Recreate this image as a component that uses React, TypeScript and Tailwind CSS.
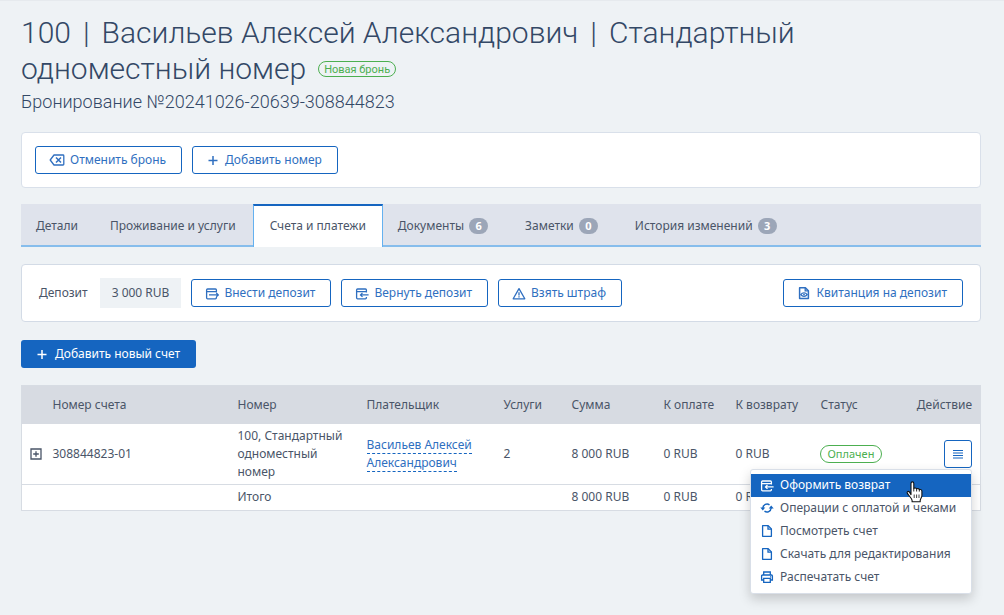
import type { ReactNode } from 'react';

function Svg({ className = 'h-[14px] w-[14px]', children }: { className?: string; children: ReactNode }) {
  return (
    <svg viewBox="0 0 14 14" fill="none" stroke="currentColor" strokeWidth="1.3" className={`shrink-0 ${className}`} aria-hidden="true">
      {children}
    </svg>
  );
}

const CancelIcon = () => (
  <svg viewBox="0 0 16 14" fill="none" stroke="currentColor" strokeWidth="1.3" className="h-[14px] w-[16px] shrink-0" aria-hidden="true">
    <path d="M5 2h9a.8.8 0 0 1 .8.8v8.4a.8.8 0 0 1-.8.8H5L1.2 7z" strokeLinejoin="round" />
    <path d="M7 4.5l5 5M12 4.5l-5 5" strokeWidth="1.5" />
  </svg>
);

const PlusIcon = () => (
  <Svg>
    <path d="M7 3v9M2.5 7.5h9" strokeWidth="1.5" />
  </Svg>
);

const DepositInIcon = () => (
  <Svg>
    <path d="M11.400 6.600V4a1 1 0 0 0-1-1H2.600a1 1 0 0 0-1 1v7.800a1 1 0 0 0 1 1h7.800a1 1 0 0 0 1-1v-.7M1.600 5.600h9.800" />
    <path d="M4 8.900h9M11.300 7l2 1.900-2 1.900" />
  </Svg>
);

const DepositOutIcon = () => (
  <Svg>
    <path d="M11.400 6.600V4a1 1 0 0 0-1-1H2.600a1 1 0 0 0-1 1v7.800a1 1 0 0 0 1 1h7.800a1 1 0 0 0 1-1v-.7M1.600 5.600h9.800" />
    <path d="M5.200 8.900h8.400M7.500 6.900l-2 2 2 2" />
  </Svg>
);

const WarningIcon = () => (
  <Svg>
    <path d="M7 2.600l5.800 10.200H1.200z" strokeLinejoin="round" />
    <path d="M7 6.200v3.200M7 10.300v1.200" />
  </Svg>
);

const ReceiptIcon = () => (
  <Svg>
    <path d="M2.600 1.700h5.800l3 3v7.800H2.600z" strokeLinejoin="round" strokeWidth="1.500" />
    <path d="M8.200 1.700v3.200h3.200" />
    <path d="M3.800 8.600c1.600-2.300 4.800-2.300 6.400 0-1.600 2.300-4.800 2.300-6.400 0z" />
    <circle cx="7" cy="8.600" r=".9" fill="currentColor" stroke="none" />
  </Svg>
);

const RefreshIcon = () => (
  <Svg>
    <path d="M2.900 7a4.100 4.100 0 0 1 6.600-3.100M11.100 7a4.100 4.100 0 0 1-6.600 3.100" strokeWidth="1.400" />
    <path d="M.3 6.600h5L2.800 9.400zM13.700 7.400h-5l2.500-2.800z" fill="currentColor" stroke="none" />
  </Svg>
);

const FileIcon = () => (
  <Svg>
    <path d="M2.600 1.700h5.600l3.200 3.200v7.400H2.600z" strokeLinejoin="round" />
    <path d="M8 1.700v3.400h3.400" />
  </Svg>
);

const PrintIcon = () => (
  <Svg>
    <path d="M3.700 5V2h6.600v3M3.700 10H1.600V6a1 1 0 0 1 1-1h8.800a1 1 0 0 1 1 1v4h-2.100" />
    <path d="M3.700 8.400h6.600v4H3.700z" />
    <path d="M10 6.800h1.200" />
  </Svg>
);

const ExpandIcon = () => (
  <svg viewBox="0 0 12 12" fill="none" stroke="currentColor" className="h-[12px] w-[12px]" aria-hidden="true">
    <path d="M1 1h10v10H1z" strokeWidth="1.300" />
    <path d="M6 3.200v5.600M3.200 6h5.600" strokeWidth="1.300" />
  </svg>
);

const MenuIcon = () => (
  <svg viewBox="0 0 12 10" fill="currentColor" className="h-[10px] w-[12px]" aria-hidden="true">
    <path d="M1 1h10v1H1zM1 3.500h10v1H1zM1 6h10v1H1zM1 8.500h10v1H1z" />
  </svg>
);

const HandCursor = () => (
  <svg viewBox="0 0 17 22" className="pointer-events-none absolute left-[155px] top-[11px] z-20 h-[22px] w-[17px]" aria-hidden="true">
    <path
      d="M5 13.600V2.400C5 .4 7.800.4 7.800 2.400v5.200c.5-1 2.600-.9 2.800.5.7-.9 2.500-.6 2.700.6 1-.6 2.600-.1 2.600 1.500v4.200c0 2.200-1.700 3.400-1.700 5.200v1.200H6.100v-1.200C6.100 17.500 3.300 15.300 1.400 12.400.5 10.800 2.100 9.700 3.400 11z"
      fill="#fff"
      stroke="#111"
      strokeWidth="1.100"
      strokeLinejoin="round"
    />
    <path d="M8.200 13.500v3.500M10.600 13.500v3.500M13 13.500v3.500" stroke="#111" strokeWidth=".8" fill="none" />
    <path d="M7.800 7.500v3M10.600 8.300v2.200M13.300 9v1.600" stroke="#111" strokeWidth=".9" fill="none" />
  </svg>
);

function OutlineButton({ icon, children }: { icon: ReactNode; children: ReactNode }) {
  return (
    <button type="button" className="flex h-[28px] items-center gap-[5px] rounded-[3px] border border-[#1565c0] bg-white pl-[13px] pr-[15px] text-[#2f6fc0]">
      {icon}
      <span>{children}</span>
    </button>
  );
}

const tabs = [
  { label: 'Детали' },
  { label: 'Проживание и услуги' },
  { label: 'Счета и платежи', active: true },
  { label: 'Документы', count: 6 },
  { label: 'Заметки', count: 0 },
  { label: 'История изменений', count: 3 },
];

function Tabs() {
  return (
    <nav className="mt-[16px] flex h-[43px] items-stretch">
      {tabs.map((tab) => (
        <a
          key={tab.label}
          href="#"
          aria-current={tab.active ? 'page' : undefined}
          className={
            tab.active
              ? 'flex items-center border-x border-t-2 border-x-[#64b1f0] border-t-[#1565c0] bg-white px-[16px] pb-[2px]'
              : 'flex items-center border-b-2 border-[#86bdec] bg-[#dfe3ec] pl-[15px] pr-[17px] pt-[2px]'
          }
        >
          {tab.label}
          {tab.count !== undefined && (
            <span className="ml-[5px] mr-[5px] flex h-[16px] w-[19px] items-center justify-center rounded-full bg-[#9ca6b8] text-[11px] font-bold leading-none text-white">
              {tab.count}
            </span>
          )}
        </a>
      ))}
      <span className="grow border-b-2 border-[#86bdec] bg-[#dfe3ec]" />
    </nav>
  );
}

const menuItems = [
  { label: 'Оформить возврат', icon: <DepositOutIcon />, active: true },
  { label: 'Операции с оплатой и чеками', icon: <RefreshIcon /> },
  { label: 'Посмотреть счет', icon: <FileIcon /> },
  { label: 'Скачать для редактирования', icon: <FileIcon /> },
  { label: 'Распечатать счет', icon: <PrintIcon /> },
];

function ActionMenu() {
  return (
    <div className="absolute right-0 top-full z-10 mt-px w-[222px] rounded-[3px] border border-[#d9dfe8] bg-white pb-[4px] pt-[4px] shadow-[0_5px_12px_rgba(0,0,0,0.18)]">
      {menuItems.map((item) => (
        <button
          key={item.label}
          type="button"
          className={
            item.active
              ? 'flex h-[23px] w-full items-center gap-[6px] whitespace-nowrap bg-[#1565c0] pl-[9px] text-white'
              : 'flex h-[23px] w-full items-center gap-[6px] whitespace-nowrap bg-white pl-[9px]'
          }
        >
          <span className={item.active ? 'text-white' : 'text-[#1565c0]'}>{item.icon}</span>
          {item.label}
        </button>
      ))}
      <HandCursor />
    </div>
  );
}

function BillsTable() {
  return (
    <table className="mt-[17px] w-full table-fixed border-collapse border border-[#d7dce3] bg-white text-left">
      <colgroup>
        <col className="w-[23px]" />
        <col />
        <col className="w-[129px]" />
        <col className="w-[137px]" />
        <col className="w-[68px]" />
        <col className="w-[92px]" />
        <col className="w-[72px]" />
        <col className="w-[85px]" />
        <col className="w-[95px]" />
        <col className="w-[73px]" />
      </colgroup>
      <thead className="bg-[#d7dbe2]">
        <tr className="h-[38px]">
          <th />
          {['Номер счета', 'Номер', 'Плательщик', 'Услуги', 'Сумма', 'К оплате', 'К возврату', 'Статус'].map((name) => (
            <th key={name} className="whitespace-nowrap px-[8px] font-normal">
              {name}
            </th>
          ))}
          <th className="whitespace-nowrap pr-[8px] text-right font-normal">Действие</th>
        </tr>
      </thead>
      <tbody>
        <tr className="border-b border-[#d7dce3]">
          <td className="pl-[8px]">
            <button type="button" aria-label="Развернуть" className="block">
              <ExpandIcon />
            </button>
          </td>
          <td className="px-[8px]">308844823-01</td>
          <td className="px-[8px] py-[3px]">100, Стандартный одноместный номер</td>
          <td className="px-[8px]">
            <a href="#" className="border-b border-dashed border-[#1565c0] text-[#2f6fc0]">
              Васильев Алексей Александрович
            </a>
          </td>
          <td className="px-[8px]">2</td>
          <td className="px-[8px]">8 000 RUB</td>
          <td className="px-[8px]">0 RUB</td>
          <td className="px-[8px]">0 RUB</td>
          <td className="px-[7px]">
            <span className="inline-flex h-[18px] items-center rounded-full border border-[#4caf50] px-[7px] align-middle text-[11px] text-[#4caf50]">Оплачен</span>
          </td>
          <td className="pr-[8px]">
            <div className="relative ml-auto w-[28px]">
              <button type="button" aria-label="Действия" className="flex h-[28px] w-[28px] items-center justify-center rounded-[3px] border border-[#1565c0] text-[#1565c0]">
                <MenuIcon />
              </button>
              <ActionMenu />
            </div>
          </td>
        </tr>
        <tr className="h-[26px]">
          <td />
          <td />
          <td className="px-[8px]">Итого</td>
          <td />
          <td />
          <td className="px-[8px]">8 000 RUB</td>
          <td className="px-[8px]">0 RUB</td>
          <td className="px-[8px]">0 RUB</td>
          <td />
          <td />
        </tr>
      </tbody>
    </table>
  );
}

const titleParts = ['100', '|', 'Васильев Алексей Александрович', '|', 'Стандартный', 'одноместный номер'];

export default function App() {
  return (
    <main className="min-h-screen border-t border-[#e6eaee] bg-[#eef2f5] pb-[24px] pl-[21px] pr-[23px] pt-[14px] font-['Noto_Sans',sans-serif] text-[12px] leading-[18px] text-[#4a5568]">
      <h1 className="flex max-w-[860px] flex-wrap items-center gap-x-[12px] font-['Roboto',sans-serif] text-[30px] font-light leading-[36px] text-[#334866]">
        {titleParts.map((part, index) => (
          <span key={index}>{part}</span>
        ))}
        <span className="flex h-[16px] items-center rounded-full border border-[#4caf50] px-[5px] text-[11px] font-normal leading-none text-[#4caf50]">
          Новая бронь
        </span>
      </h1>
      <p className="mt-[3px] font-['Roboto',sans-serif] text-[18px] font-light leading-[24px] text-[#334866]">Бронирование №20241026-20639-308844823</p>

      <section className="mt-[18px] flex gap-[10px] rounded-[4px] border border-[#d9e0ea] bg-white px-[13px] py-[13px]">
        <OutlineButton icon={<CancelIcon />}>Отменить бронь</OutlineButton>
        <OutlineButton icon={<PlusIcon />}>Добавить номер</OutlineButton>
      </section>

      <Tabs />

      <section className="mt-[17px] flex items-center gap-[10px] rounded-[4px] border border-[#d3dbe6] bg-white px-[17px] py-[13px]">
        <span className="pr-[2px]">Депозит</span>
        <output className="flex h-[30px] items-center bg-[#eef2f5] px-[12px]">3 000 RUB</output>
        <OutlineButton icon={<DepositInIcon />}>Внести депозит</OutlineButton>
        <OutlineButton icon={<DepositOutIcon />}>Вернуть депозит</OutlineButton>
        <OutlineButton icon={<WarningIcon />}>Взять штраф</OutlineButton>
        <div className="ml-auto">
          <OutlineButton icon={<ReceiptIcon />}>Квитанция на депозит</OutlineButton>
        </div>
      </section>

      <button type="button" className="mt-[18px] flex h-[28px] items-center gap-[6px] rounded-[3px] bg-[#1565c0] pl-[14px] pr-[16px] text-white">
        <PlusIcon />
        Добавить новый счет
      </button>

      <BillsTable />
    </main>
  );
}
